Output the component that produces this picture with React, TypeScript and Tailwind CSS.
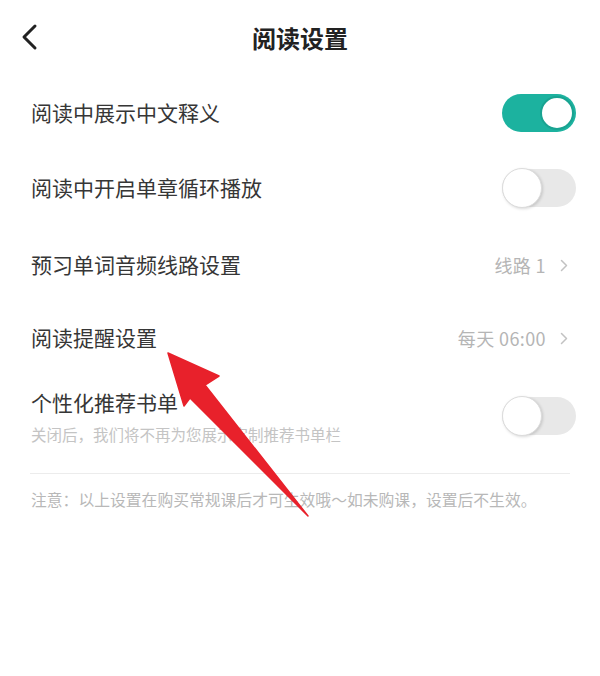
import React from "react";

const Toggle = ({ on }: { on: boolean }) =>
  on ? (
    <div className="flex h-[38px] w-[74px] items-center justify-end rounded-full bg-[#1cb29f] p-[2px]">
      <div className="h-[34px] w-[34px] rounded-full border-[2px] border-[#19a391] bg-white" />
    </div>
  ) : (
    <div className="flex h-[38px] w-[74px] items-center justify-start rounded-full bg-[#e8e8e8]">
      <div className="h-[40px] w-[40px] shrink-0 rounded-full border border-[#dcdcdc] bg-white shadow-[1px_1px_3px_rgba(0,0,0,0.15)]" />
    </div>
  );

const Chevron = () => (
  <svg width="8" height="13" viewBox="0 0 8 13" fill="none" className="ml-[14px]">
    <path d="M1.5 1.5l5 5-5 5" stroke="#c2c2c2" strokeWidth="1.5" strokeLinecap="round" strokeLinejoin="round" />
  </svg>
);

export default function App() {
  return (
    <div
      className="relative h-[676px] w-[600px] overflow-hidden bg-white text-[#363636]"
      style={{ fontFamily: '"Noto Sans CJK SC", "Noto Sans", sans-serif' }}
    >
      {/* header */}
      <div className="relative flex h-[75px] items-center justify-center">
        <svg width="18" height="28" viewBox="0 0 18 28" fill="none" className="absolute left-[20px] top-[23px]">
          <path d="M15 3L4 14l11 11" stroke="#222" strokeWidth="3" strokeLinecap="round" strokeLinejoin="round" />
        </svg>
        <span className="text-[24px] font-bold text-[#222]">阅读设置</span>
      </div>

      <div className="flex h-[76px] items-center justify-between pl-[31px] pr-[24px]">
        <span className="text-[21px]">阅读中展示中文释义</span>
        <Toggle on />
      </div>
      <div className="flex h-[74px] items-center justify-between pl-[31px] pr-[24px]">
        <span className="text-[21px]">阅读中开启单章循环播放</span>
        <Toggle on={false} />
      </div>
      <div className="flex h-[80px] items-center justify-between pl-[31px] pr-[32px]">
        <span className="text-[21px]">预习单词音频线路设置</span>
        <span className="flex items-center text-[18px] tracking-[0.4px] text-[#b5b5b5]">
          线路 1<Chevron />
        </span>
      </div>
      <div className="flex h-[66px] items-center justify-between pl-[31px] pr-[32px]">
        <span className="text-[21px]">阅读提醒设置</span>
        <span className="flex items-center text-[18px] tracking-[0.4px] text-[#b5b5b5]">
          每天 06:00<Chevron />
        </span>
      </div>
      <div className="flex items-center justify-between pl-[31px] pr-[24px] pt-[17px]">
        <div className="flex flex-col gap-[8px]">
          <span className="text-[21px] leading-[28px]">个性化推荐书单</span>
          <span className="text-[15.5px] leading-[20px] text-[#c4c4c4]">关闭后，我们将不再为您展示定制推荐书单栏</span>
        </div>
        <Toggle on={false} />
      </div>
      <div className="mx-[30px] mt-[29px] h-px bg-[#ececec]" />
      <div className="mt-[16px] pl-[31px] text-[15.8px] leading-[20px] text-[#b8b8b8]">
        注意：以上设置在购买常规课后才可生效哦～如未购课，设置后不生效。
      </div>

      {/* red annotation arrow */}
      <svg className="absolute left-0 top-0" width="600" height="676" viewBox="0 0 600 676">
        <polygon
          points="168,353 219,376 205,385 308,516 190,398 184,406"
          fill="#e8212b"
          stroke="#e8212b"
          strokeWidth="1.5"
          strokeLinejoin="round"
        />
      </svg>
    </div>
  );
}
